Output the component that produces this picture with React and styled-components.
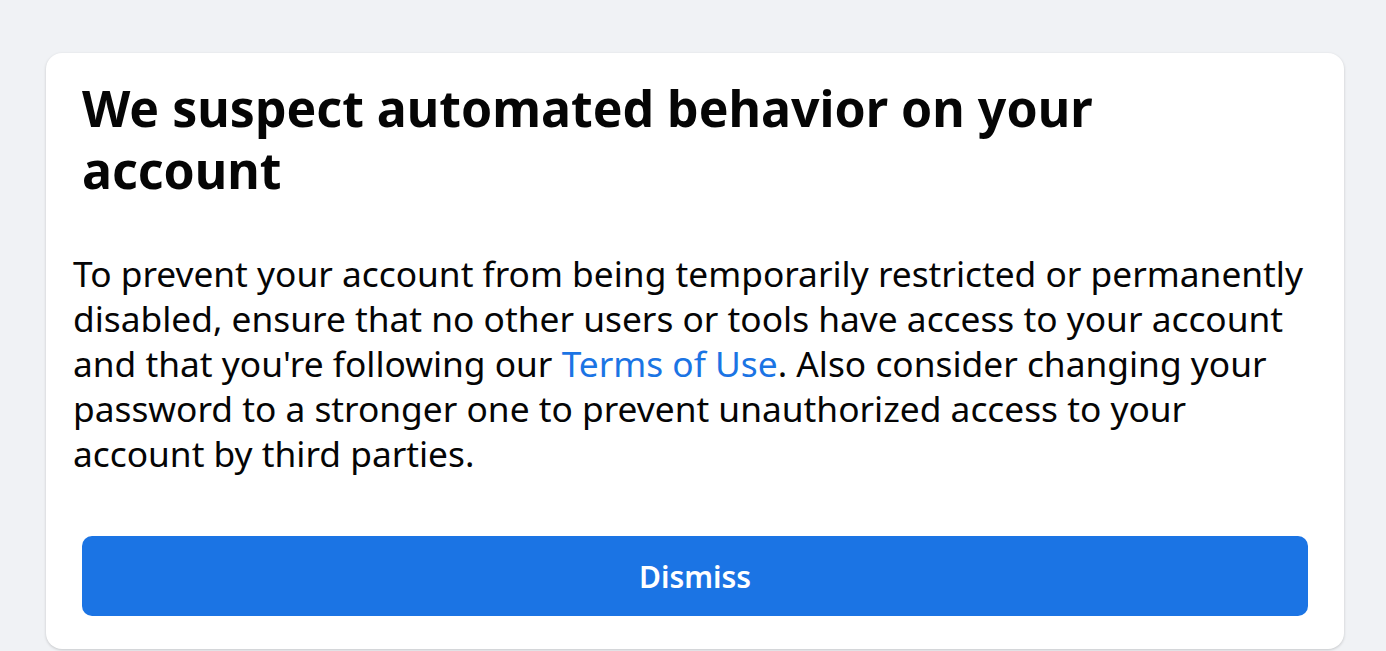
import React from 'react';
import styled, { createGlobalStyle } from 'styled-components';

const GlobalStyle = createGlobalStyle`
  html, body {
    margin: 0;
    padding: 0;
    background-color: #f0f2f5;
    font-family: "Noto Sans", "Open Sans", "Liberation Sans", sans-serif;
  }
`

const Page = styled.div`
  padding: 53px 42px 0 46px;
  height: 651px;
  box-sizing: border-box;
  overflow: hidden;
`

const Card = styled.div`
  background-color: #ffffff;
  border-radius: 16px;
  box-shadow: 0 1px 3px rgba(0, 0, 0, 0.18);
  padding: 24px 36px 33px 27px;
  display: flex;
  flex-direction: column;
`

const Title = styled.h1`
  margin: 0 48px 0 9px;
  font-size: 50px;
  font-weight: 700;
  line-height: 62px;
  color: #050505;
`

const Body = styled.p`
  margin: 50px 0 0 0;
  font-size: 35.3px;
  line-height: 45px;
  color: #050505;
`

const Link = styled.a`
  color: #1b74e4;
  text-decoration: none;
`

const Button = styled.button`
  margin: 60px 0 0 9px;
  height: 80px;
  border: none;
  border-radius: 10px;
  background-color: #1b74e4;
  color: #ffffff;
  font-family: inherit;
  font-size: 30px;
  font-weight: 600;
  cursor: pointer;
`

function App() {
  return (
    <Page>
      <GlobalStyle />
      <Card>
        <Title>We suspect automated behavior on your account</Title>
        <Body>
          To prevent your account from being temporarily restricted or permanently
          disabled, ensure that no other users or tools have access to your account
          and that you're following our <Link href="#">Terms of Use</Link>. Also consider
          changing your password to a stronger one to prevent unauthorized access to
          your account by third parties.
        </Body>
        <Button>Dismiss</Button>
      </Card>
    </Page>
  );
}

export default App;
